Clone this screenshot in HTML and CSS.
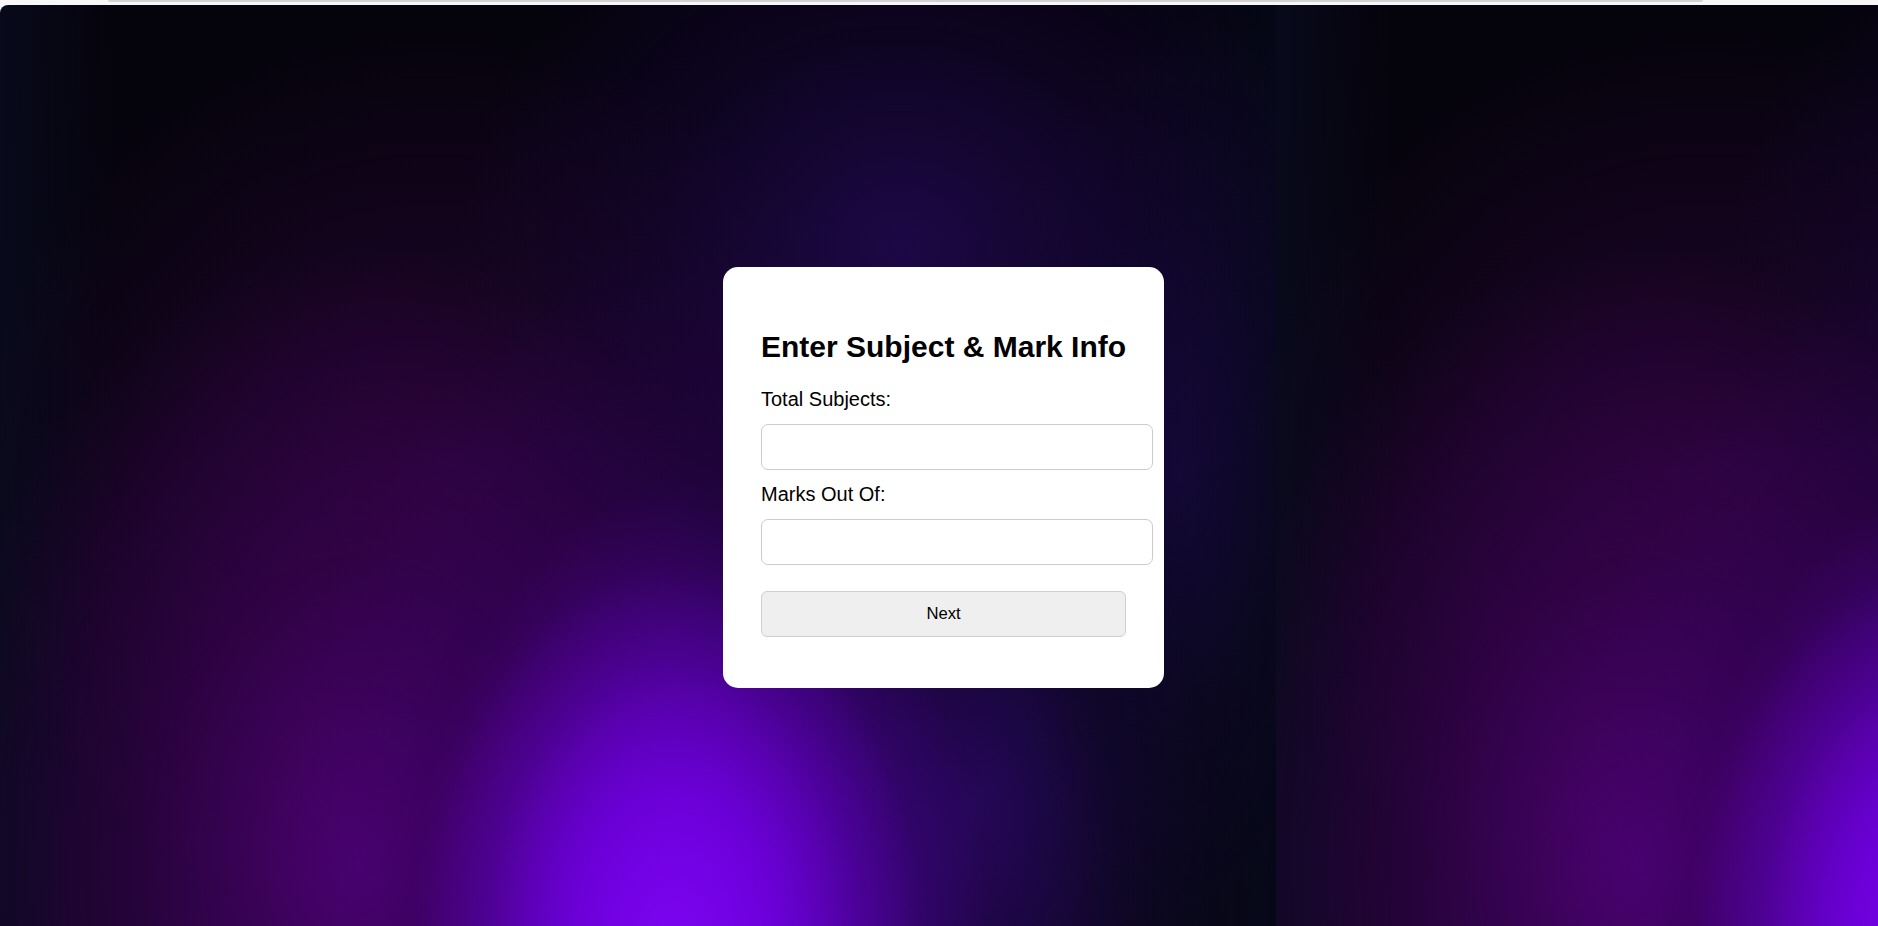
FILE: index.html
```html
<!DOCTYPE html>
<html lang="en">
<head>
<meta charset="utf-8">
<title>Enter Subject &amp; Mark Info</title>
<link rel="stylesheet" href="styles.css">
</head>
<body>
  <div class="topbar"><div class="topbar-line"></div></div>
  <main class="stage">
    <form class="card">
      <h2 class="card-title">Enter Subject &amp; Mark Info</h2>
      <label class="field-label" for="subjects">Total Subjects:</label>
      <input class="field-input" id="subjects" type="number">
      <label class="field-label" for="marks">Marks Out Of:</label>
      <input class="field-input" id="marks" type="number">
      <button class="next-btn" type="button">Next</button>
    </form>
  </main>
</body>
</html>
```

FILE: styles.css
```css
html, body {
  margin: 0;
  padding: 0;
  height: 100%;
}

body {
  background: #f7f7f7;
  font-family: "Liberation Sans", Arial, sans-serif;
  overflow: hidden;
}

.topbar {
  height: 5px;
  background: #f7f7f7;
}

.topbar-line {
  margin-left: 108px;
  width: 1595px;
  height: 2px;
  background: #d2d2d2;
  border-radius: 0 0 2px 2px;
}

.stage {
  height: 921px;
  box-sizing: border-box;
  border-top-left-radius: 8px;
  padding-top: 262px;
  padding-left: 9px;
  display: flex;
  flex-direction: column;
  align-items: center;
  background-color: #06040e;
  background-image:
    radial-gradient(ellipse 250px 380px at 672px 940px, rgba(124, 4, 242, 1) 0%, rgba(114, 0, 230, 0.8) 40%, rgba(100, 0, 200, 0.3) 75%, rgba(80, 0, 160, 0) 100%),
    radial-gradient(ellipse 430px 720px at 700px 960px, rgba(104, 0, 212, 0.9) 0%, rgba(88, 0, 175, 0.68) 38%, rgba(55, 0, 105, 0.3) 68%, rgba(40, 0, 70, 0) 100%),
    radial-gradient(ellipse 430px 620px at 360px 860px, rgba(92, 0, 135, 0.8) 0%, rgba(68, 0, 96, 0.5) 50%, rgba(35, 0, 52, 0) 100%),
    radial-gradient(ellipse 440px 380px at 900px 240px, rgba(44, 10, 108, 0.6) 0%, rgba(30, 6, 75, 0.32) 55%, rgba(15, 4, 40, 0) 100%),
    radial-gradient(ellipse 190px 460px at 1180px 470px, rgba(26, 10, 75, 0.6) 0%, rgba(18, 8, 50, 0.3) 55%, rgba(10, 5, 30, 0) 100%),
    radial-gradient(ellipse 230px 360px at 980px 800px, rgba(58, 16, 165, 0.4) 0%, rgba(40, 10, 120, 0.2) 55%, rgba(20, 8, 60, 0) 100%),
    radial-gradient(ellipse 460px 460px at 430px 480px, rgba(52, 4, 66, 0.6) 0%, rgba(30, 3, 45, 0) 100%),
    linear-gradient(90deg, rgba(8, 10, 28, 0.9) 0%, rgba(8, 8, 24, 0) 9%, rgba(0, 0, 0, 0) 88%, rgba(5, 8, 24, 0.8) 100%),
    linear-gradient(180deg, #05030c 0%, #07040f 40%, #0a0618 100%);
  background-size: 1276px 100%;
  background-repeat: repeat-x;
}

.card {
  width: 365px;
  height: 331px;
  padding: 40px 38px 50px 38px;
  background: #ffffff;
  border-radius: 15px;
  display: flex;
  flex-direction: column;
  align-items: flex-start;
}

.card-title {
  margin: 23px 0 24px 0;
  font-size: 30px;
  line-height: 34px;
  font-weight: bold;
  color: #000;
  white-space: nowrap;
}

.field-label {
  display: block;
  font-size: 20px;
  line-height: 23px;
  color: #000;
  margin-bottom: 13px;
}

.field-input {
  box-sizing: border-box;
  width: 392px;
  height: 46px;
  margin: 0 0 13px 0;
  padding: 0 12px;
  border: 1px solid #cbcbcb;
  border-radius: 7px;
  background: #fff;
  font-family: inherit;
  font-size: 20px;
  flex: none;
}

.next-btn {
  box-sizing: border-box;
  width: 365px;
  height: 46px;
  margin-top: 13px;
  border: 1px solid #cfcfcf;
  border-radius: 6px;
  background: #efefef;
  font-family: inherit;
  font-size: 16.67px;
  color: #000;
  flex: none;
}
```
